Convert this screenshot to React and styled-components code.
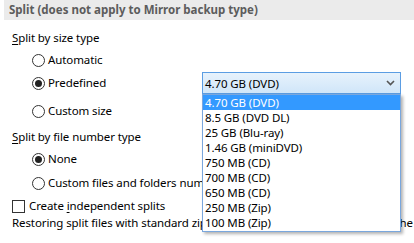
import React from "react";
import styled, { createGlobalStyle } from "styled-components";

const Global = createGlobalStyle`
  html, body { margin: 0; padding: 0; background: #fff; }
  body { font-family: "Noto Sans", "Open Sans", sans-serif; font-size: 11.5px; letter-spacing: -0.1px; color: #000; }
`;

const Page = styled.div`
  position: relative;
  width: 414px;
  height: 243px;
  overflow: hidden;
  background: #fff;
`;

const Header = styled.div`
  margin-left: 4px;
  height: 20px;
  line-height: 20px;
  padding-left: 5px;
  background: #ebebeb;
  color: #5c5c5c;
  font-weight: bold;
  letter-spacing: 0;
  white-space: nowrap;
`;

const Body = styled.div`
  display: flex;
  flex-direction: column;
  padding-left: 12px;
`;

const Row = styled.div`
  display: flex;
  align-items: center;
  height: ${(p) => p.$h || 22}px;
  margin-top: ${(p) => p.$mt || 0}px;
  padding-left: ${(p) => p.$indent || 0}px;
  white-space: nowrap;
`;

const Label = styled.span`
  line-height: 16px;
`;

const Key = styled.span`
  text-decoration: underline;
  text-underline-offset: 2px;
`;

const RadioCircle = styled.span`
  box-sizing: border-box;
  width: 13px;
  height: 13px;
  border: 1px solid #333;
  border-radius: 50%;
  margin-right: 3px;
  display: inline-flex;
  align-items: center;
  justify-content: center;
  flex-shrink: 0;
  &::after {
    content: "";
    width: 7px;
    height: 7px;
    border-radius: 50%;
    background: #222;
    display: ${(p) => (p.$on ? "block" : "none")};
  }
`;

const Check = styled.span`
  box-sizing: border-box;
  width: 13px;
  height: 13px;
  border: 1px solid #333;
  margin-right: 4px;
  flex-shrink: 0;
`;

const ComboWrap = styled.div`
  position: relative;
  margin-left: auto;
  margin-right: 13px;
`;

const Combo = styled.div`
  box-sizing: border-box;
  width: 199px;
  height: 22px;
  border: 1px solid #5b9de3;
  background: linear-gradient(#e7f2fc, #d0e6f9);
  display: flex;
  align-items: center;
  padding-left: 2px;
  padding-right: 5px;
`;

const ComboText = styled.span`
  flex: 1;
`;

const List = styled.div`
  position: absolute;
  left: 0;
  top: 100%;
  box-sizing: border-box;
  width: 199px;
  border: 1px solid #7aa7dd;
  background: #fff;
  box-shadow: 2px 2px 3px rgba(0, 0, 0, 0.3);
  padding-bottom: 1px;
  z-index: 2;
`;

const Item = styled.div`
  height: 15px;
  line-height: 15px;
  padding-left: 2px;
  background: ${(p) => (p.$sel ? "#3399ff" : "transparent")};
  color: ${(p) => (p.$sel ? "#fff" : "#000")};
`;

const items = [
  "4.70 GB (DVD)",
  "8.5 GB (DVD DL)",
  "25 GB (Blu-ray)",
  "1.46 GB (miniDVD)",
  "750 MB (CD)",
  "700 MB (CD)",
  "650 MB (CD)",
  "250 MB (Zip)",
  "100 MB (Zip)",
];

function Radio({ on, children }) {
  return (
    <>
      <RadioCircle $on={on} />
      <Label>{children}</Label>
    </>
  );
}

export default function App() {
  return (
    <Page>
      <Global />
      <Header>Split (does not apply to Mirror backup type)</Header>
      <Body>
        <Row $h={16} $mt={10}>
          <Label>
            <Key>S</Key>plit by size type
          </Label>
        </Row>
        <Row $h={22} $mt={3} $indent={20}>
          <Radio>Automatic</Radio>
        </Row>
        <Row $h={22} $mt={1} $indent={20}>
          <Radio on>Predefined</Radio>
          <ComboWrap>
            <Combo>
              <ComboText>4.70 GB (DVD)</ComboText>
              <svg width="9" height="6" viewBox="0 0 9 6">
                <path d="M1 1 L4.5 4.5 L8 1" fill="none" stroke="#555" strokeWidth="1.6" />
              </svg>
            </Combo>
            <List>
              {items.map((t, i) => (
                <Item key={t} $sel={i === 0}>
                  {t}
                </Item>
              ))}
            </List>
          </ComboWrap>
        </Row>
        <Row $h={22} $mt={6} $indent={20}>
          <Radio>Custom size</Radio>
        </Row>
        <Row $h={16} $mt={7}>
          <Label>
            <Key>S</Key>plit by file number type
          </Label>
        </Row>
        <Row $h={22} $mt={3} $indent={20}>
          <Radio on>None</Radio>
        </Row>
        <Row $h={22} $mt={2} $indent={20}>
          <Radio>Custom files and folders number</Radio>
        </Row>
        <Row $h={18} $mt={3}>
          <Check />
          <Label>
            Create <Key>i</Key>ndependent splits
          </Label>
        </Row>
        <Row $h={16} $mt={0}>
          <Label>Restoring split files with standard zip tools is not supported; instead use the software</Label>
        </Row>
      </Body>
    </Page>
  );
}
